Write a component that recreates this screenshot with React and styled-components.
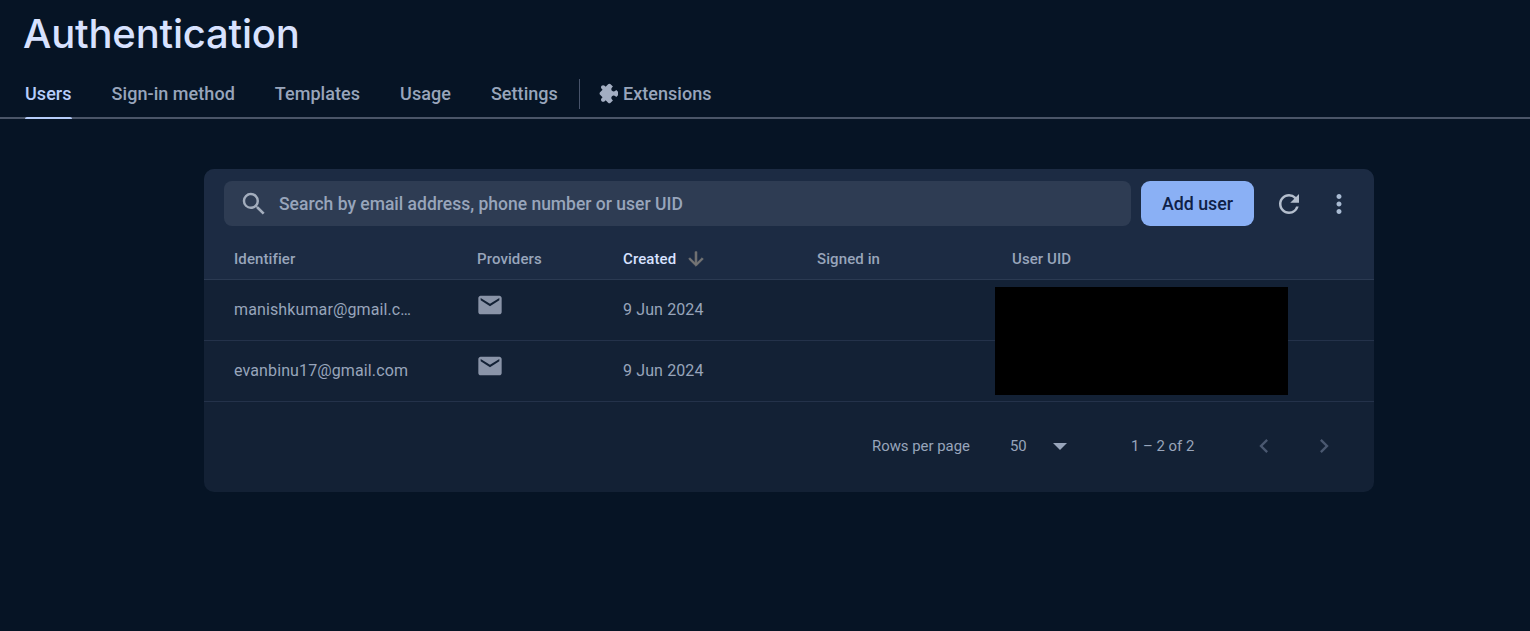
import React from "react";
import styled, { createGlobalStyle } from "styled-components";

const GlobalStyle = createGlobalStyle`
  html, body {
    margin: 0;
    height: 100%;
    background: #061425;
    font-family: Roboto, "Liberation Sans", sans-serif;
    overflow: hidden;
  }
`;

const Page = styled.div`
  display: flex;
  flex-direction: column;
  height: 631px;
  background: #061425;
`;

const Title = styled.h1`
  margin: 0;
  padding: 11px 0 0 23px;
  height: 59px;
  font-family: Inter, sans-serif;
  font-size: 40px;
  line-height: 45px;
  font-weight: 500;
  letter-spacing: -0.2px;
  color: #d8e2ff;
`;

const Tabs = styled.nav`
  display: flex;
  align-items: stretch;
  height: 49px;
  padding-left: 25px;
  box-sizing: border-box;
  border-bottom: 2px solid #4a5568;
`;

const Tab = styled.div`
  position: relative;
  display: flex;
  align-items: center;
  gap: 5px;
  margin-right: ${p => p.$last ? 0 : 40}px;
  font-size: 18px;
  font-weight: 500;
  letter-spacing: 0.05px;
  color: ${p => p.$active ? "#b6cdfb" : "#98a5bb"};
  ${p => p.$active && `
    &::after {
      content: "";
      position: absolute;
      left: 0;
      right: 0;
      bottom: -2px;
      height: 2px;
      border-radius: 2px 2px 0 0;
      background: #b6cdfb;
    }
  `}
`;

const TabDivider = styled.div`
  width: 1px;
  height: 30px;
  margin: 9px 18px 0 -19px;
  background: #47536a;
`;

const Card = styled.section`
  position: relative;
  width: 1170px;
  margin: 50px 0 0 204px;
  border-radius: 10px;
  overflow: hidden;
  background: #132135;
`;

const CardHead = styled.div`
  background: #1c2b43;
  border-bottom: 1px solid #2b3a52;
`;

const Toolbar = styled.div`
  display: flex;
  align-items: center;
  height: 45px;
  padding: 12px 23px 0 20px;
`;

const Search = styled.div`
  display: flex;
  align-items: center;
  flex: 1;
  height: 45px;
  padding-left: 15px;
  gap: 10px;
  border-radius: 8px;
  background: #2e3c53;
  font-size: 17.5px;
  font-weight: 500;
  color: #98a5bb;
`;

const AddButton = styled.button`
  width: 113px;
  height: 45px;
  margin-left: 10px;
  border: 0;
  border-radius: 9px;
  background: #8ab0f5;
  font-family: inherit;
  font-size: 17.8px;
  font-weight: 500;
  color: #0f2046;
`;

const IconButton = styled.span`
  display: flex;
  align-items: center;
  justify-content: center;
  width: 24px;
  height: 24px;
  margin-left: ${p => p.$gap}px;
  svg {
    flex-shrink: 0;
  }
`;

const Row = styled.div`
  display: grid;
  grid-template-columns: 243px 146px 194px 195px 1fr;
  align-items: center;
  height: ${p => p.$height}px;
  padding: ${p => p.$head ? "12px 0 0 30px" : "0 0 2px 30px"};
  box-sizing: border-box;
  ${p => p.$divided && "border-bottom: 1px solid #24324a;"}
`;

const HeadCell = styled.div`
  display: flex;
  align-items: center;
  gap: 9px;
  font-size: 15px;
  font-weight: 500;
  letter-spacing: 0.1px;
  color: ${p => p.$sorted ? "#d8e2ff" : "#98a5bb"};
`;

const Cell = styled.div`
  font-size: 16px;
  color: #98a5bb;
  letter-spacing: 0.12px;
`;

const ProviderCell = styled.div`
  display: flex;
  margin: -8px 0 0 -1px;
`;

const Footer = styled.div`
  display: flex;
  align-items: center;
  height: 90px;
  padding: 0 0 2px 668px;
  box-sizing: border-box;
  font-size: 14.9px;
  color: #98a5bb;
`;

const RowsValue = styled.span`
  margin-left: 40px;
  width: 43px;
`;

const Caret = styled.span`
  width: 0;
  height: 0;
  border-left: 7px solid transparent;
  border-right: 7px solid transparent;
  border-top: 7px solid #98a5bb;
`;

const PageRange = styled.span`
  margin-left: 64px;
`;

const Redaction = styled.div`
  position: absolute;
  left: 791px;
  top: 118px;
  width: 293px;
  height: 108px;
  background: #000;
`;

function MailIcon() {
  return (
    <svg width="28" height="28" viewBox="0 0 24 24" fill="#8a94a8">
      <path d="M20 4H4c-1.100 0-2 .9-2 2v12c0 1.100.9 2 2 2h16c1.100 0 2-.9 2-2V6c0-1.100-.9-2-2-2zm0 4-8 5-8-5V6l8 5 8-5v2z" />
    </svg>
  );
}

function Chevron({ d }) {
  return (
    <svg width="28" height="28" viewBox="0 0 24 24" fill="#4a5870">
      <path d={d} />
    </svg>
  );
}

const rows = [
  { id: "manish", email: "manishkumar@gmail.c…" },
  { id: "evan", email: "evanbinu17@gmail.com" },
];

export default function App() {
  return (
    <Page>
      <GlobalStyle />
      <Title>Authentication</Title>
      <Tabs>
        <Tab $active>Users</Tab>
        <Tab>Sign-in method</Tab>
        <Tab>Templates</Tab>
        <Tab>Usage</Tab>
        <Tab>Settings</Tab>
        <TabDivider />
        <Tab $last>
          <svg width="21" height="21" viewBox="0 0 24 24" fill="#a3aec2" style={{ marginLeft: -1 }}>
            <path
              transform="rotate(-135 12 12)"
              d="M20.500 11H19V7c0-1.100-.9-2-2-2h-4V3.500C13 2.120 11.880 1 10.500 1S8 2.120 8 3.500V5H4c-1.100 0-1.990.9-1.990 2v3.800H3.500c1.490 0 2.700 1.210 2.700 2.700s-1.210 2.700-2.700 2.700H2V20c0 1.100.9 2 2 2h3.800v-1.500c0-1.490 1.210-2.700 2.700-2.700 1.490 0 2.700 1.210 2.700 2.700V22H17c1.100 0 2-.9 2-2v-4h1.500c1.380 0 2.500-1.120 2.500-2.500S21.880 11 20.500 11z"
            />
          </svg>
          Extensions
        </Tab>
      </Tabs>

      <Card>
        <CardHead>
          <Toolbar>
            <Search>
              <svg width="30" height="30" viewBox="0 0 24 24" fill="#a3adbd">
                <path d="M15.500 14h-.79l-.28-.27A6.470 6.470 0 0 0 16 9.500 6.500 6.500 0 1 0 9.500 16c1.610 0 3.090-.59 4.230-1.570l.27.28v.79l5 4.990L20.490 19l-4.990-5zm-6 0C7.010 14 5 11.990 5 9.500S7.010 5 9.500 5 14 7.010 14 9.500 11.990 14 9.500 14z" />
              </svg>
              Search by email address, phone number or user UID
            </Search>
            <AddButton>Add user</AddButton>
            <IconButton $gap={23}>
              <svg width="30" height="30" viewBox="0 0 24 24" fill="#b4becd">
                <path d="M17.650 6.350A7.958 7.958 0 0 0 12 4c-4.420 0-7.990 3.580-7.990 8s3.570 8 7.990 8c3.730 0 6.840-2.550 7.730-6h-2.080A5.990 5.990 0 0 1 12 18c-3.310 0-6-2.690-6-6s2.690-6 6-6c1.660 0 3.140.69 4.220 1.780L13 11h7V4l-2.350 2.350z" />
              </svg>
            </IconButton>
            <IconButton $gap={26}>
              <svg width="30" height="30" viewBox="0 0 24 24" fill="#a9bbd3">
                <path d="M12 8c1.100 0 2-.9 2-2s-.9-2-2-2-2 .9-2 2 .9 2 2 2zm0 2c-1.100 0-2 .9-2 2s.9 2 2 2 2-.9 2-2-.9-2-2-2zm0 6c-1.100 0-2 .9-2 2s.9 2 2 2 2-.9 2-2-.9-2-2-2z" />
              </svg>
            </IconButton>
          </Toolbar>
          <Row $height={53} $head>
            <HeadCell>Identifier</HeadCell>
            <HeadCell>Providers</HeadCell>
            <HeadCell $sorted>
              Created
              <svg width="22" height="22" viewBox="0 0 24 24" fill="#757575" stroke="#757575" strokeWidth="0.7">
                <path d="M20 12l-1.410-1.410L13 16.170V4h-2v12.170l-5.580-5.590L4 12l8 8 8-8z" />
              </svg>
            </HeadCell>
            <HeadCell>Signed in</HeadCell>
            <HeadCell>User UID</HeadCell>
          </Row>
        </CardHead>

        {rows.map(row => (
          <Row key={row.id} $height={61} $divided>
            <Cell>{row.email}</Cell>
            <ProviderCell><MailIcon /></ProviderCell>
            <Cell>9 Jun 2024</Cell>
            <Cell />
            <Cell />
          </Row>
        ))}

        <Footer>
          Rows per page
          <RowsValue>50</RowsValue>
          <Caret />
          <PageRange>1 – 2 of 2</PageRange>
          <IconButton $gap={58}>
            <Chevron d="M15.410 7.410 14 6l-6 6 6 6 1.410-1.410L10.830 12z" />
          </IconButton>
          <IconButton $gap={36}>
            <Chevron d="M10 6 8.590 7.410 13.170 12l-4.580 4.590L10 18l6-6z" />
          </IconButton>
        </Footer>

        <Redaction />
      </Card>
    </Page>
  );
}
